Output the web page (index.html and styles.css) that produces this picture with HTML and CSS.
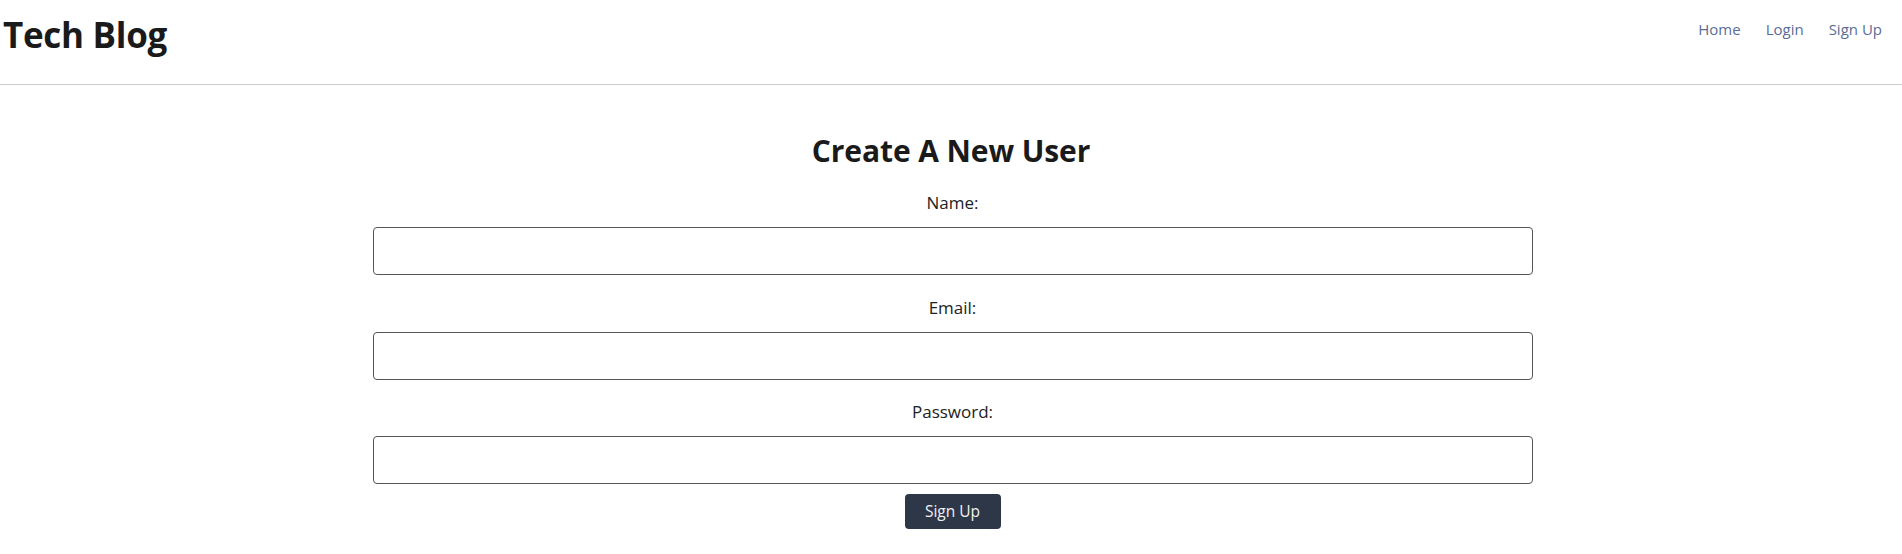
FILE: index.html
```html
<!DOCTYPE html>
<html lang="en">
<head>
<meta charset="utf-8">
<title>Tech Blog - Sign Up</title>
<link rel="stylesheet" href="styles.css">
</head>
<body>
<header class="site-header">
  <h1 class="brand">Tech Blog</h1>
  <nav class="nav">
    <a class="nav-link" href="#">Home</a>
    <a class="nav-link" href="#">Login</a>
    <a class="nav-link" href="#">Sign Up</a>
  </nav>
</header>
<main class="signup">
  <h2 class="signup-title">Create A New User</h2>
  <form class="signup-form">
    <div class="fields">
      <div class="field">
        <label class="field-label" for="name">Name:</label>
        <input class="field-input" id="name" type="text">
      </div>
      <div class="field">
        <label class="field-label" for="email">Email:</label>
        <input class="field-input" id="email" type="email">
      </div>
      <div class="field">
        <label class="field-label" for="password">Password:</label>
        <input class="field-input" id="password" type="password">
      </div>
    </div>
    <button class="btn" type="button">Sign Up</button>
  </form>
</main>
</body>
</html>
```

FILE: styles.css
```css
* {
  box-sizing: border-box;
}

html, body {
  margin: 0;
  padding: 0;
  background: #ffffff;
}

body {
  font-family: "Segoe UI", "Open Sans", "Noto Sans", sans-serif;
  color: #1a1a1a;
}

.site-header {
  height: 85px;
  border-bottom: 1px solid #cccccc;
  display: flex;
  justify-content: space-between;
  align-items: flex-start;
  padding: 0 20px 0 3px;
}

.brand {
  margin: 17px 0 0 0;
  font-size: 35px;
  line-height: 35px;
  font-weight: 700;
  color: #1a1a1a;
  letter-spacing: -0.3px;
}

.nav {
  display: flex;
  gap: 25px;
  margin-top: 19px;
}

.nav-link {
  font-size: 15px;
  line-height: 20px;
  color: #5a6d96;
  text-decoration: none;
}

.signup {
  display: flex;
  flex-direction: column;
  align-items: center;
}

.signup-title {
  margin: 48px 0 22px 0;
  font-size: 30px;
  line-height: 36px;
  font-weight: 700;
  color: #1a1a1a;
  letter-spacing: -0.1px;
}

.signup-form {
  width: 1160px;
  margin-left: 3px;
  display: flex;
  flex-direction: column;
  align-items: center;
}

.fields {
  width: 100%;
  display: flex;
  flex-direction: column;
  gap: 20.5px;
}

.field {
  display: flex;
  flex-direction: column;
  align-items: center;
  gap: 12px;
}

.field-label {
  font-size: 17px;
  line-height: 24px;
  color: #222222;
}

.field-input {
  width: 100%;
  height: 48px;
  border: 1px solid #555555;
  border-radius: 4px;
  background: #ffffff;
  padding: 0 10px;
  font: inherit;
}

.btn {
  margin-top: 9.5px;
  width: 96px;
  height: 35px;
  border: none;
  border-radius: 4px;
  background: #2d3748;
  color: #f1f1f1;
  font-family: inherit;
  font-size: 15.5px;
  line-height: 35px;
  padding: 0;
  cursor: pointer;
}
```
